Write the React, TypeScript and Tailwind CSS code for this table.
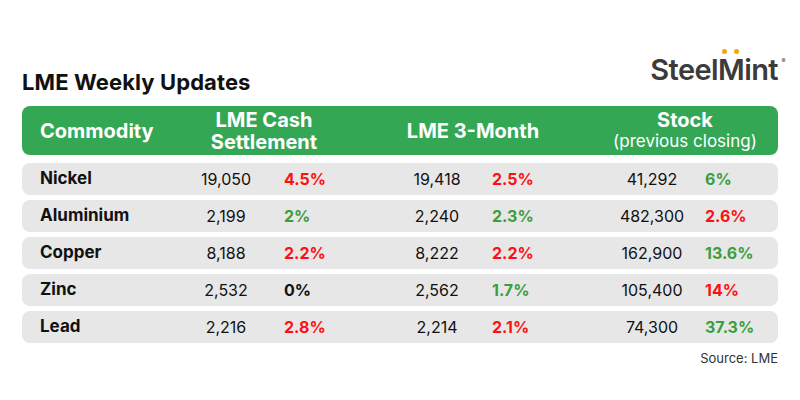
const rows = [
  { name: 'Nickel', cash: '19,050', cashPct: '4.5%', cashC: 'r', m3: '19,418', m3Pct: '2.5%', m3C: 'r', stock: '41,292', stockPct: '6%', stockC: 'g' },
  { name: 'Aluminium', cash: '2,199', cashPct: '2%', cashC: 'g', m3: '2,240', m3Pct: '2.3%', m3C: 'g', stock: '482,300', stockPct: '2.6%', stockC: 'r' },
  { name: 'Copper', cash: '8,188', cashPct: '2.2%', cashC: 'r', m3: '8,222', m3Pct: '2.2%', m3C: 'r', stock: '162,900', stockPct: '13.6%', stockC: 'g' },
  { name: 'Zinc', cash: '2,532', cashPct: '0%', cashC: 'k', m3: '2,562', m3Pct: '1.7%', m3C: 'g', stock: '105,400', stockPct: '14%', stockC: 'r' },
  { name: 'Lead', cash: '2,216', cashPct: '2.8%', cashC: 'r', m3: '2,214', m3Pct: '2.1%', m3C: 'r', stock: '74,300', stockPct: '37.3%', stockC: 'g' },
]

const pctColor: Record<string, string> = {
  r: 'text-[#ff1010]',
  g: 'text-[#3a9e3f]',
  k: 'text-[#111111]',
}

const cols = 'grid grid-cols-[164px_80px_118px_106px_114px_96px_78px] items-center'

function Logo() {
  return (
    <div className="relative font-['Inter',sans-serif] text-[29px] font-semibold leading-none tracking-[-0.6px] text-[#3b3b3b]">
      Steel<span className="relative">M<span className="absolute left-[4px] top-[-3px] h-[5px] w-[5px] rounded-full bg-[#f2a516]" /><span className="absolute right-[5px] top-[-3px] h-[5px] w-[5px] rounded-full bg-[#f2a516]" /></span>int
      <span className="absolute right-[-7px] top-[3px] text-[6px] font-normal">®</span>
    </div>
  )
}

export default function App() {
  return (
    <div className="h-[400px] w-[800px] bg-white px-[22px] pt-[45px] font-['Inter',sans-serif] text-[#111111]">
      <div className="flex h-[44px] items-end justify-between">
        <h1 className="mb-[-4px] text-[22px] font-bold leading-none tracking-[0.1px]">LME Weekly Updates</h1>
        <div className="mb-[5px] mr-[0px]">
          <Logo />
        </div>
      </div>

      <div className={`${cols} mt-[17px] h-[49px] rounded-[8px] bg-[#34a755] text-white`}>
        <div className="pl-[18px] text-[20px] font-bold">Commodity</div>
        <div className="col-span-2 pr-[42px] text-center text-[20px] font-bold leading-[22px]">
          LME Cash<br />Settlement
        </div>
        <div className="col-span-2 pr-[42px] text-center text-[20px] font-bold">LME 3-Month</div>
        <div className="col-span-2 pr-[12px] text-center leading-[21px]">
          <div className="text-[20px] font-bold">Stock</div>
          <div className="text-[17px] font-normal">(previous closing)</div>
        </div>
      </div>

      <div className="mt-[8px] flex flex-col gap-[5px]">
        {rows.map((r) => (
          <div key={r.name} className={`${cols} h-[32px] rounded-[8px] bg-[#e7e7e7] text-[16px]`}>
            <div className="pl-[18px] text-[17px] font-bold">{r.name}</div>
            <div className="text-center">{r.cash}</div>
            <div className={`pl-[18px] font-bold ${pctColor[r.cashC]}`}>{r.cashPct}</div>
            <div className="text-center">{r.m3}</div>
            <div className={`pl-[2px] font-bold ${pctColor[r.m3C]}`}>{r.m3Pct}</div>
            <div className="text-center">{r.stock}</div>
            <div className={`pl-[5px] font-bold ${pctColor[r.stockC]}`}>{r.stockPct}</div>
          </div>
        ))}
      </div>

      <div className="mt-[6px] text-right text-[13px] text-[#333333]">Source: LME</div>
    </div>
  )
}
